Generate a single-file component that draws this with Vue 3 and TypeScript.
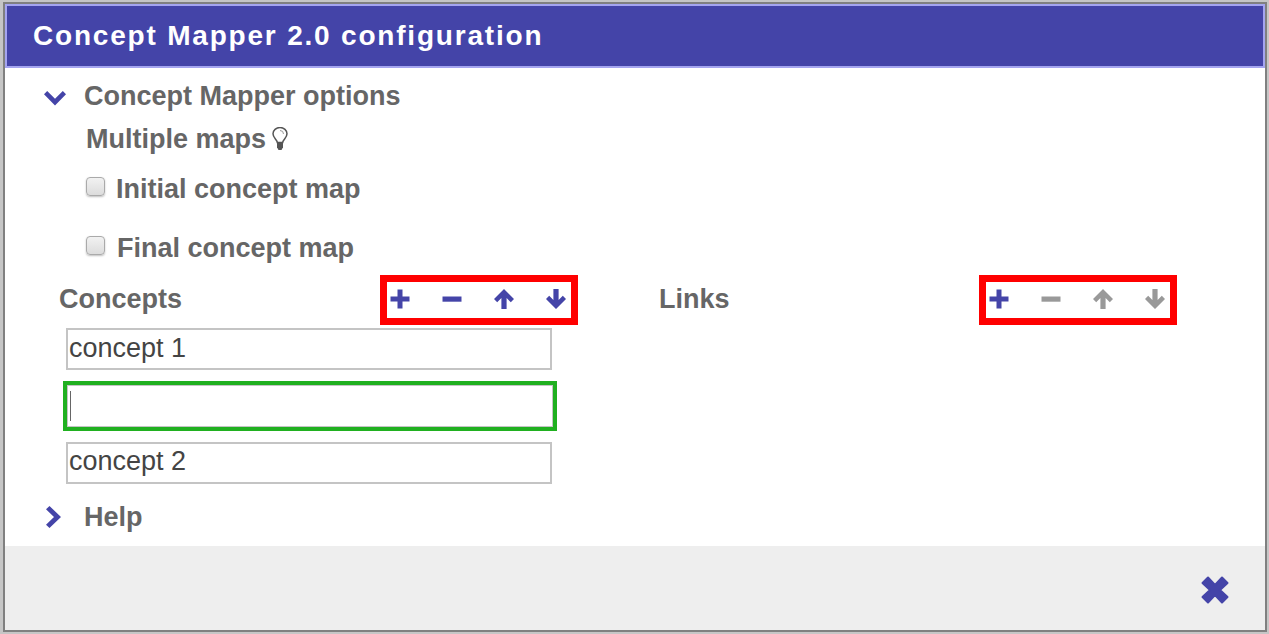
<script setup lang="ts">
const actions = [
  { name: 'plus', d: 'M7.500 0.500h5V7.500h7v5h-7v7h-5v-7h-7v-5h7z' },
  { name: 'minus', d: 'M0.500 7.500h19v5.200H0.500z' },
  { name: 'up', d: 'M10 0l10 10-3.200 3.200-4.200-4.200V20H7.400V9L3.200 13.200 0 10z' },
  { name: 'down', d: 'M10 20l10-10-3.200-3.200-4.200 4.200V0H7.400V11L3.200 6.800 0 10z' },
]
const concepts = ['concept 1', '', 'concept 2']
</script>

<template>
  <div class="dialog">
    <header class="dialog__head">Concept Mapper 2.0 configuration</header>
    <main class="dialog__body">
      <div class="section-title">
        <svg class="chevron" viewBox="0 0 22 15" width="22" height="15"><path d="M3.200 0L11 7.800 18.800 0 22 3.200 11 14.500 0 3.200z" /></svg>
        <span>Concept Mapper options</span>
      </div>
      <div class="multi">
        Multiple maps
        <svg class="bulb" viewBox="0 0 16 24" width="16" height="24">
          <path class="bulb__glass" d="M5.300 15.500C5 12.500 1 11 1 6.800a7 6.300 0 0 1 14 0c0 4.200-4 5.700-4.300 8.700z" />
          <path class="bulb__base" d="M5 16h6v4.200L9.500 23h-3L5 20.200z" />
          <path class="bulb__shine" d="M8 3.500A3.500 3.500 0 0 1 11.500 7" />
        </svg>
      </div>
      <label class="check check--first"><span class="check__box"></span>Initial concept map</label>
      <label class="check check--second"><span class="check__box"></span>Final concept map</label>

      <div class="columns">
        <section class="col col--concepts">
          <div class="col__head">
            <h3>Concepts</h3>
            <div class="tools">
              <svg v-for="a in actions" :key="a.name" viewBox="0 0 20 20" width="20" height="20">
                <path :d="a.d" />
              </svg>
            </div>
          </div>
          <div class="inputs">
            <div
              v-for="(c, i) in concepts"
              :key="i"
              class="field"
              :class="{ 'field--active': c === '' }"
            >
              <span v-if="c">{{ c }}</span>
              <i v-else class="caret"></i>
            </div>
          </div>
        </section>
        <section class="col col--links">
          <div class="col__head">
            <h3>Links</h3>
            <div class="tools">
              <svg
                v-for="(a, i) in actions"
                :key="a.name"
                viewBox="0 0 20 20"
                width="20"
                height="20"
                :class="{ off: i > 0 }"
              >
                <path :d="a.d" />
              </svg>
            </div>
          </div>
        </section>
      </div>

      <div class="section-title section-title--help">
        <svg class="chevron chevron--right" viewBox="0 0 15 22" width="15" height="22"><path d="M3.500 0L15 11 3.500 22 0 18.800 8 11 0 3.200z" /></svg>
        <span>Help</span>
      </div>
    </main>
    <footer class="dialog__foot">
      <svg viewBox="0 0 30 30" width="30" height="30">
        <path d="M15 10L8 2.500 2.500 8l7.500 7-7.500 7L8 27.500l7-7.500 7 7.500 5.500-5.500-7.500-7 7.500-7L22 2.500z" />
      </svg>
    </footer>
  </div>
</template>

<style>
html,
body {
  margin: 0;
  background: #fff;
}
</style>

<style scoped>
.dialog {
  box-sizing: border-box;
  width: 1269px;
  height: 634px;
  display: flex;
  flex-direction: column;
  border: solid #c6c6c6;
  border-width: 2px 2px 2px 3px;
  box-shadow: inset 0 0 0 2px #808080;
  padding: 2px;
  font-family: "Liberation Sans", Arial, sans-serif;
  color: #666;
  background: #fff;
}

.dialog__head {
  flex: none;
  height: 64px;
  box-sizing: border-box;
  padding-left: 26px;
  line-height: 59px;
  background: #4444a8;
  border: 2px solid #a5a5f0;
  color: #fff;
  font-size: 28px;
  font-weight: 700;
  letter-spacing: 1.8px;
}

.dialog__body {
  flex: 1;
  min-height: 0;
}

.section-title {
  display: flex;
  align-items: center;
  height: 30px;
  margin-top: 13px;
  font-size: 27px;
  font-weight: 700;
}

.section-title > span {
  margin-left: 18px;
}

.chevron {
  margin-left: 39px;
  margin-top: 4px;
  fill: #4444a8;
}

.chevron--right {
  margin-left: 41px;
  margin-top: 0;
}

.section-title--help > span {
  margin-left: 23px;
}

.multi {
  display: flex;
  align-items: center;
  gap: 6px;
  height: 30px;
  margin: 13px 0 0 81px;
  font-size: 27px;
  font-weight: 700;
}

.bulb__glass {
  fill: #fff;
  stroke: #555;
  stroke-width: 1.500px;
}

.bulb__base {
  fill: #555;
}

.bulb__shine {
  fill: none;
  stroke: #999;
  stroke-width: 1px;
}

.check {
  display: flex;
  align-items: center;
  height: 30px;
  margin-left: 81px;
  font-size: 27px;
  font-weight: 700;
}

.check--first {
  margin-top: 20px;
}

.check--second {
  margin-top: 29px;
}

.check__box {
  box-sizing: border-box;
  width: 19px;
  height: 19px;
  margin: -6px 11px 0 0;
  border: 1px solid #aaa;
  border-radius: 4px;
  background: linear-gradient(#f2f2f2, #dcdcdc);
  box-shadow: 0 1px 2px rgba(0, 0, 0, 0.25);
}

.check--second .check__box {
  margin-right: 12px;
}

.columns {
  display: grid;
  grid-template-columns: 600px 520px;
  margin: 11px 0 0 54px;
}

.col__head {
  display: flex;
  align-items: center;
  height: 51px;
}

.col h3 {
  margin: 0;
  font-size: 27px;
  font-weight: 700;
}

.tools {
  box-sizing: border-box;
  align-self: flex-end;
  margin-left: auto;
  width: 198px;
  height: 50px;
  display: flex;
  align-items: center;
  justify-content: space-between;
  padding: 0 5px 3px 3px;
  border: 7px solid #f00;
}

.col--concepts .col__head {
  width: 519px;
}

.col--links .col__head {
  width: 518px;
}

.tools svg {
  fill: #4444a8;
}

.tools svg.off {
  fill: #999;
}

.inputs {
  display: flex;
  flex-direction: column;
  margin: 3px 0 0 7px;
  gap: 11px;
}

.field {
  box-sizing: border-box;
  width: 486px;
  height: 42px;
  display: flex;
  align-items: center;
  padding: 0 1px 2px;
  border: 2px solid #c4c4c4;
  color: #444;
  font-size: 27px;
}

.field:last-child {
  padding-bottom: 4px;
}

.field--active {
  width: 494px;
  height: 50px;
  margin: 0 0 0 -3px;
  padding: 0 0 0 3px;
  border: 4px solid #20b020;
  box-shadow: inset 0 0 0 1px #c4c4c4;
}

.caret {
  display: block;
  width: 1px;
  height: 30px;
  background: #666;
}

.section-title--help {
  margin-top: 18px;
}

.dialog__foot {
  flex: none;
  height: 84px;
  box-sizing: border-box;
  display: flex;
  justify-content: flex-end;
  align-items: center;
  padding: 4px 35px 0 0;
  background: #eee;
}

.dialog__foot svg {
  fill: #4444a8;
  stroke: #4444a8;
  stroke-width: 2px;
  stroke-linejoin: round;
}
</style>
